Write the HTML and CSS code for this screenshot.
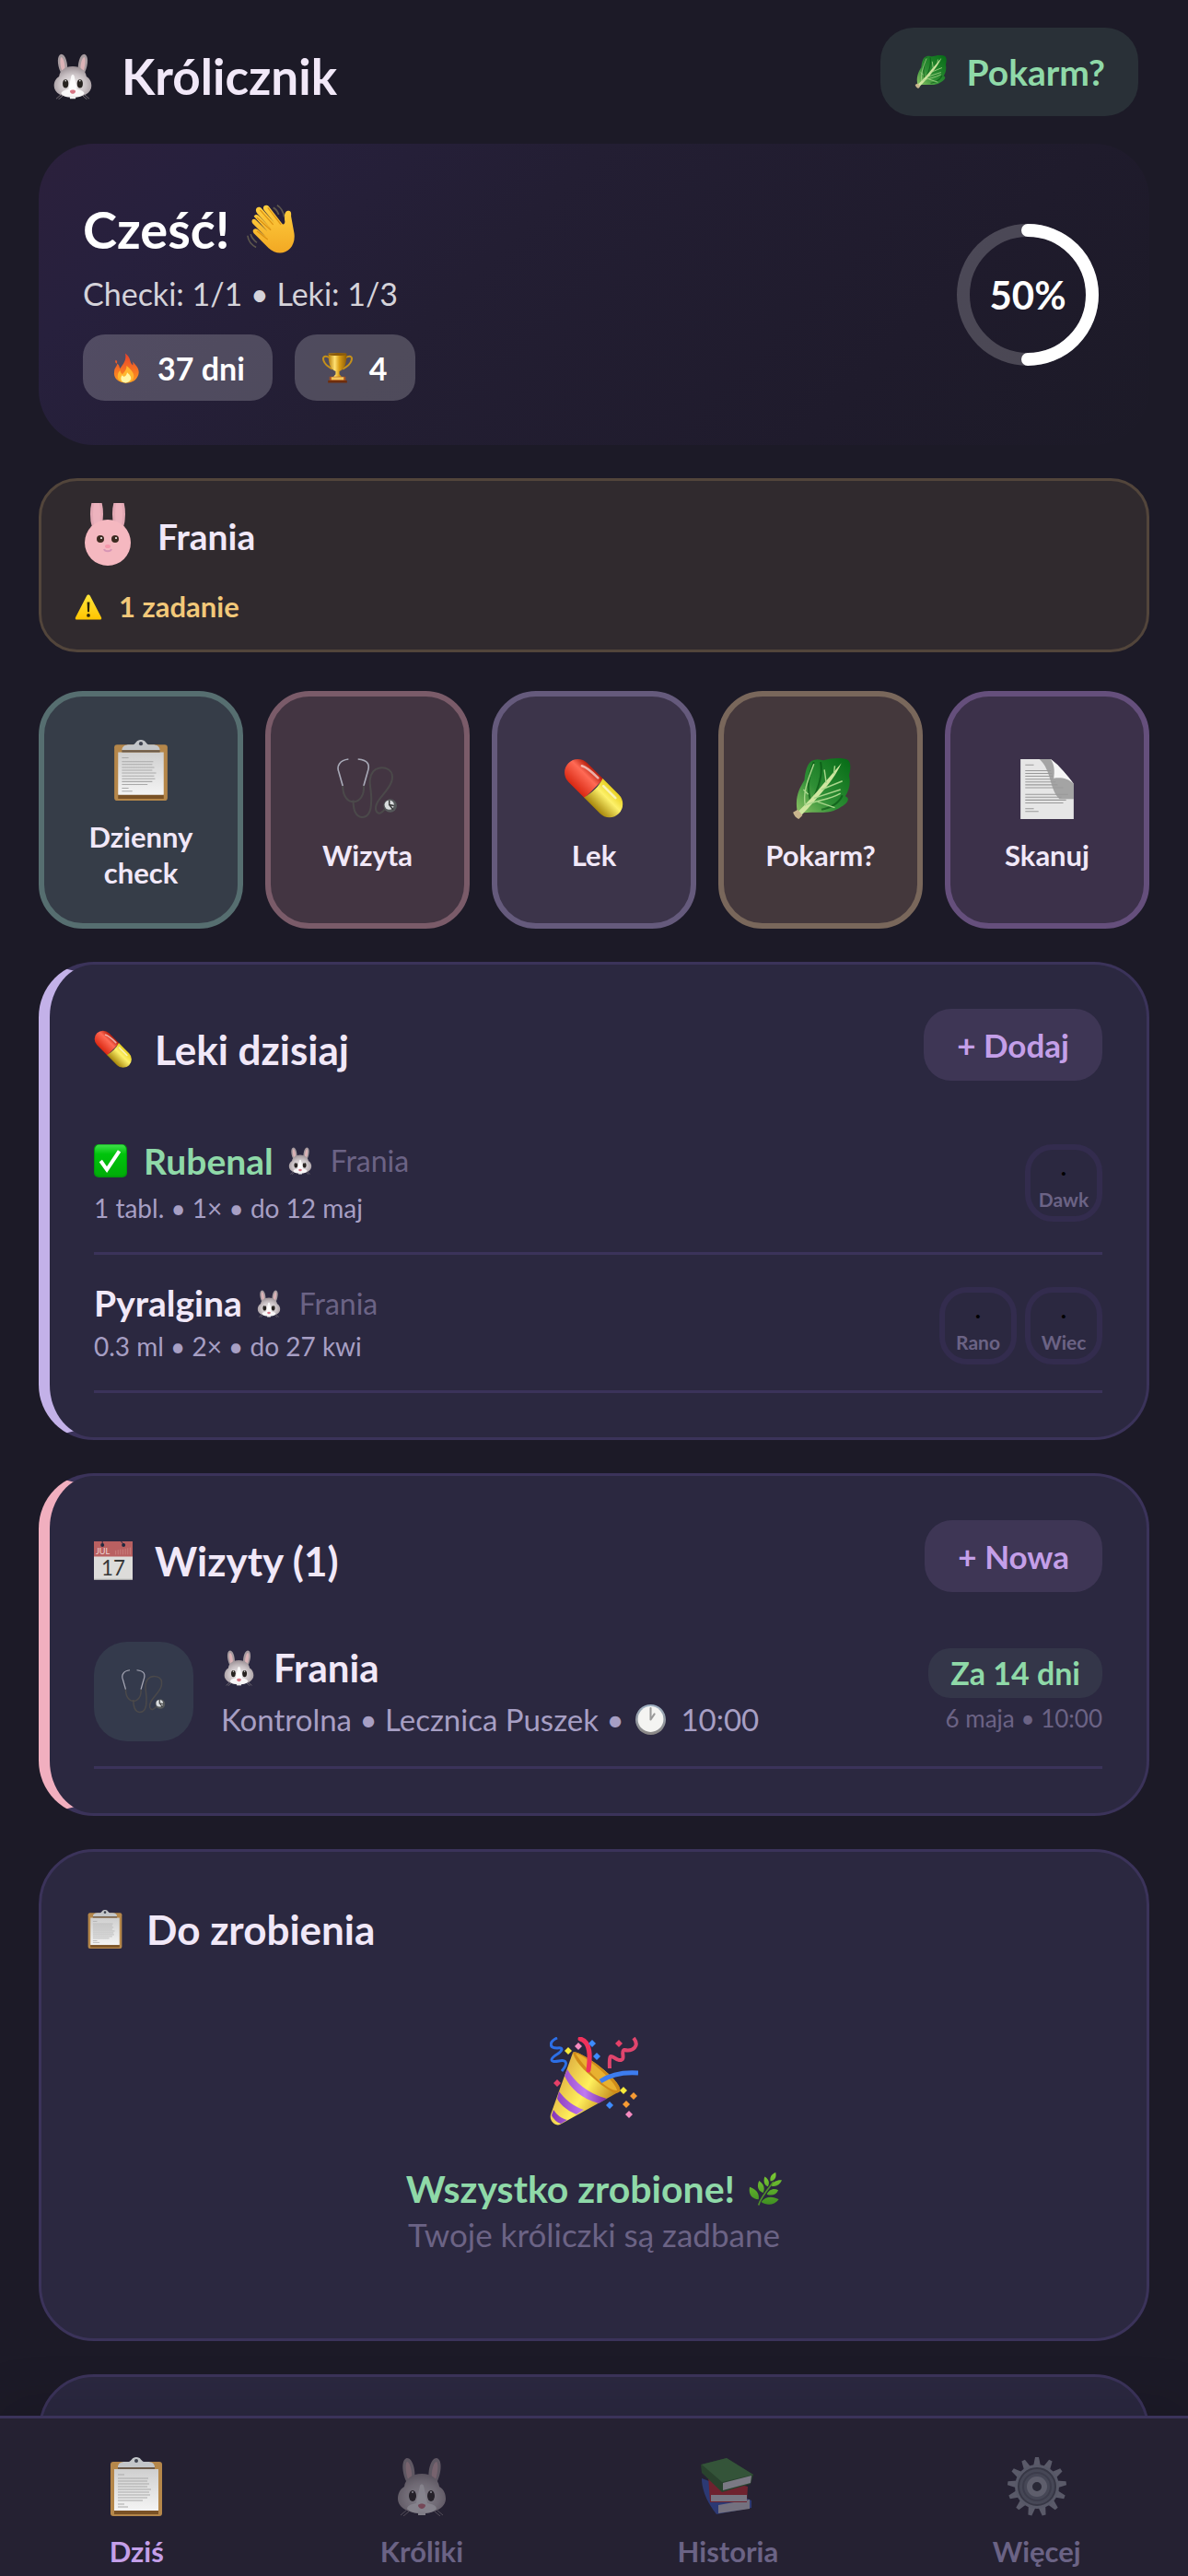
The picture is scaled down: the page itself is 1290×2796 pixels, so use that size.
FILE: index.html
```html
<!DOCTYPE html>
<html lang="pl">

<head>
    <meta charset="UTF-8">
    <meta name="viewport" content="width=device-width, initial-scale=1.0">
    <title>Królicznik</title>
    <link rel="stylesheet" href="styles.css">
</head>

<body>
    <svg class="sprite" aria-hidden="true">
        <defs>
            <radialGradient id="g-fur" cx=".5" cy=".6" r=".6">
                <stop offset="0" stop-color="#f4f1f2" />
                <stop offset=".6" stop-color="#c9c1c4" />
                <stop offset="1" stop-color="#9a8f94" />
            </radialGradient>
            <linearGradient id="g-leaf" x1="0" y1="1" x2="1" y2="0">
                <stop offset="0" stop-color="#8fc467" />
                <stop offset=".4" stop-color="#2f8f35" />
                <stop offset="1" stop-color="#056b16" />
            </linearGradient>
            <linearGradient id="g-hand" x1="0" y1="0" x2="0" y2="1">
                <stop offset="0" stop-color="#ffcf3f" />
                <stop offset="1" stop-color="#f2a823" />
            </linearGradient>
            <linearGradient id="g-fire" x1="0" y1="0" x2="0" y2="1">
                <stop offset="0" stop-color="#e8402a" />
                <stop offset="1" stop-color="#ff9a1f" />
            </linearGradient>
            <linearGradient id="g-gold" x1="0" y1="0" x2="1" y2="0">
                <stop offset="0" stop-color="#b57d0a" />
                <stop offset=".35" stop-color="#ffe071" />
                <stop offset=".6" stop-color="#d99d14" />
                <stop offset="1" stop-color="#8f5d05" />
            </linearGradient>
            <linearGradient id="g-paper" x1="0" y1="0" x2="0" y2="1">
                <stop offset="0" stop-color="#cfcfcf" />
                <stop offset="1" stop-color="#f4f4f4" />
            </linearGradient>
            <linearGradient id="g-red" x1="0" y1="0" x2="0" y2="1">
                <stop offset="0" stop-color="#b8200f" />
                <stop offset=".35" stop-color="#ff6a55" />
                <stop offset="1" stop-color="#d92812" />
            </linearGradient>
            <linearGradient id="g-yellow" x1="0" y1="0" x2="0" y2="1">
                <stop offset="0" stop-color="#e8d022" />
                <stop offset=".4" stop-color="#fdf16a" />
                <stop offset="1" stop-color="#a8870c" />
            </linearGradient>
            <linearGradient id="g-check" x1="0" y1="0" x2="0" y2="1">
                <stop offset="0" stop-color="#3fe04a" />
                <stop offset=".3" stop-color="#00c40c" />
                <stop offset="1" stop-color="#00ad08" />
            </linearGradient>
            <linearGradient id="g-warn" x1="0" y1="0" x2="0" y2="1">
                <stop offset="0" stop-color="#ffe63c" />
                <stop offset="1" stop-color="#ffc400" />
            </linearGradient>
            <linearGradient id="g-clock" x1="0" y1="0" x2="0" y2="1">
                <stop offset="0" stop-color="#9fb2c4" />
                <stop offset="1" stop-color="#8a8684" />
            </linearGradient>
            <linearGradient id="g-cone" x1="0" y1="0" x2="1" y2=".6">
                <stop offset="0" stop-color="#d99b22" />
                <stop offset=".3" stop-color="#e6bd47" />
                <stop offset=".6" stop-color="#fff05c" />
                <stop offset="1" stop-color="#b87812" />
            </linearGradient>
            <linearGradient id="g-stripe" x1="0" y1="0" x2="1" y2="0">
                <stop offset="0" stop-color="#8636b8" />
                <stop offset=".6" stop-color="#c07af0" />
                <stop offset="1" stop-color="#7a2aa3" />
            </linearGradient>
            <linearGradient id="g-herb" x1="0" y1="0" x2="0" y2="1">
                <stop offset="0" stop-color="#7ccb35" />
                <stop offset="1" stop-color="#3f8f22" />
            </linearGradient>
        </defs>

        <symbol id="i-rabbit" viewBox="0 0 64 64">
            <path d="M15 26C10 15 10 2 16 1c6 0 10 14 8 24zM49 26c5-11 5-24-1-25-6 0-10 14-8 24z" fill="#a69b9f" />
            <path d="M17 24c-3-9-3-18-1-19 3 0 6 11 5 18zM47 24c3-9 3-18 1-19-3 0-6 11-5 18z" fill="#dcb3b7" />
            <path d="M32 18c11 0 18 6 19 14 5 3 7 8 7 13 0 10-12 16-26 16S6 55 6 45c0-5 2-10 7-13 1-8 8-14 19-14z" fill="url(#g-fur)" />
            <path d="M30 31c1-2 3-2 4 0l4 19c6 1 10 3 10 6-3 4-10 5-16 5s-13-1-16-5c0-3 4-5 10-6z" fill="#fff" opacity=".85" />
            <ellipse cx="22" cy="42" rx="4" ry="6" fill="#26221f" />
            <ellipse cx="42" cy="42" rx="4" ry="6" fill="#26221f" />
            <circle cx="22" cy="38" r="1" fill="#fff" />
            <circle cx="42" cy="38" r="1" fill="#fff" />
            <path d="M28 52c2-2 6-2 8 0 0 3-3 4-4 4s-4-1-4-4z" fill="#d67584" />
            <path d="M28 59h8v4h-8z" fill="#eee" />
            <path d="M16 57l-7 6M18 59l-6 5M48 57l7 6M46 59l6 5" stroke="#8b8488" fill="none" />
        </symbol>

        <symbol id="i-lettuce" viewBox="0 0 64 64">
            <path d="M8 58C4 42 10 31 15 23 16 12 19 3 25 2 31 0 33 3 36 2 42 0 56-1 61 2 65 6 63 14 62 18 64 26 62 34 58 40 64 42 60 48 54 51 44 58 36 57 28 57 20 57 14 57 8 58z" fill="url(#g-leaf)" />
            <path d="M22 46c-5-14-2-30 3-42M26 39c6-14 8-26 6-35M33 54c10-2 18-6 22-15" stroke="#054f10" stroke-width="2" fill="none" opacity=".6" />
            <path d="M6 59C17 47 24 41 35 27 42 19 48 12 54 5 48 18 42 25 35 34 25 46 18 54 9 63z" fill="#cfe6a0" />
            <path d="M16 50c-3-12 2-26 9-44M17 49c11-5 24-5 36-12M38 26l-2-14M46 17l1-9M33 33l22-9M25 42l28-9M14 33l5 5M29 46l18 6" stroke="#a9d68b" stroke-width="1.4" fill="none" />
            <path d="M3 57l5-3 5 6-4 4c-3-1-5-4-6-7z" fill="#c9b58d" />
        </symbol>

        <symbol id="i-wave" viewBox="0 0 64 64">
            <path d="M9 15c3-4 6-1 8 1L31 31 13 11c-4-6 2-10 6-6L36 24 22 7c-3-5 3-8 6-5L45 24c2 3 4 1 4-2-1-6-1-13 4-14 5 0 4 4 4 7l4 22c3 22-18 33-33 19L10 38c-5-5 0-9 4-6l11 10L8 25c-4-5 1-8 4-5l15 15z" fill="url(#g-hand)" />
            <path d="M13 17l18 16M17 7l17 19M27 4l17 22M13 34l14 11" stroke="#dd9213" stroke-width="1.5" fill="none" />
            <path d="M39 1c5 3 8 8 9 15M34 4c4 2 6 6 7 9M1 40c1 7 5 12 11 15M5 38c1 5 4 8 8 11" stroke="#5d574d" stroke-width="2" fill="none" />
        </symbol>

        <symbol id="i-fire" viewBox="0 0 64 64">
            <path d="M31 1c14 11 7 17 16 25 1-4 0-6-1-8 10 10 18 20 11 32-5 10-14 13-25 13C17 63 5 54 8 38c1-7 6-10 6-15 5 3 4 6 6 10C28 22 34 15 31 1zM11 15c4 2 3 5 2 8-3-2-4-5-2-8z" fill="url(#g-fire)" />
            <path d="M34 27c9 8 16 16 15 23-1 9-9 13-17 13-9 0-17-5-17-14 0-6 3-10 5-12 1 4 3 7 5 8 6-6 9-11 9-18z" fill="#ffb52e" />
            <path d="M35 41c5 5 9 8 8 14-2 5-6 8-11 8s-10-3-10-9c0-3 1-5 3-7 1 2 3 3 4 3 4-2 5-5 6-9z" fill="#fff5a5" />
        </symbol>

        <symbol id="i-trophy" viewBox="0 0 64 64">
            <path d="M15 10C4 4 0 9 3 17c3 9 11 13 18 17M49 10c11-6 15-1 12 7-3 9-11 13-18 17" stroke="#c4901a" stroke-width="4" fill="none" />
            <path d="M13 1h38c1 20-4 34-15 38v6l6 7H22l6-7v-6C17 35 12 21 13 1z" fill="url(#g-gold)" />
            <ellipse cx="32" cy="3" rx="19" ry="3" fill="#8c5b08" />
            <path d="M15 50h34v9H15z" fill="#a8531f" />
            <path d="M19 51h26v6H19z" fill="#f2c55b" />
            <path d="M12 58h40v5H12z" fill="#6f2d0c" />
        </symbol>

        <symbol id="i-warning" viewBox="0 0 64 64">
            <path d="M28 6c2-4 6-4 8 0l26 50c1 3 0 5-4 5H6c-4 0-5-2-4-5z" fill="url(#g-warn)" />
            <path d="M29 20h6l-1 23h-4z" fill="#2b2509" />
            <circle cx="32" cy="51" r="4" fill="#2b2509" />
        </symbol>

        <symbol id="i-clipboard" viewBox="0 0 64 64">
            <rect x="4" y="5" width="56" height="59" rx="3" fill="#b5874a" />
            <path d="M8 57h48v5H8z" fill="#7a5226" />
            <path d="M8 13h48v45H8z" fill="url(#g-paper)" />
            <path d="M12 19h7M12 23h33M12 26h32M12 29h34M12 32h32M12 35h36M12 38h34M12 41h35M12 44h32M12 47h27M12 51h7M12 54h11" stroke="#a9a9a9" fill="none" />
            <path d="M12 11c0-4 3-6 8-6h4c3-1 3-5 8-5s5 4 8 5h4c5 0 8 2 8 6z" fill="#c3c6c9" />
            <path d="M12 11h40v2H12z" fill="#6b5a4a" />
            <circle cx="32" cy="4" r="2" fill="#3f4450" />
        </symbol>

        <symbol id="i-stethoscope" viewBox="0 0 64 64">
            <path d="M12 1C3 2-1 8 2 15l4 14M22 1c11 1 13 6 10 14l-4 14" stroke="#a7a8b6" stroke-width="1.6" fill="none" />
            <path d="M6 29c0 24 24 21 22 0M17 44c0 9 2 17 9 18 7 0 10-6 10-17 1-12-5-22 2-31 6-7 22-5 20 8-1 12-20 22-17 33 2 5 6 3 9-1" stroke="#4b494a" stroke-width="2" fill="none" />
            <circle cx="56" cy="50" r="7" fill="#55585a" />
            <circle cx="55" cy="49" r="5" fill="#d9dcde" />
            <path d="M55 44v5l5 1M55 49l4 5" stroke="#3b3c3c" stroke-width="1.5" fill="none" />
        </symbol>

        <symbol id="i-pill" viewBox="0 0 64 64">
            <g transform="rotate(45 32 32)">
                <path d="M32 18v28H8a14 14 0 0 1 0-28z" fill="url(#g-red)" />
                <path d="M31 18h24a14 14 0 0 1 0 28H31c3-9 3-19 0-28z" fill="url(#g-yellow)" />
                <path d="M6 24c5-3 13-3 21-3M37 23h18" stroke="#fff" stroke-width="2.5" stroke-linecap="round" fill="none" opacity=".6" />
            </g>
        </symbol>

        <symbol id="i-page" viewBox="0 0 64 64">
            <path d="M4 1h32c10 8 17 17 24 26v37H4z" fill="#e6e6e6" />
            <path d="M24 1h12l12 14 12 12v16H45C34 32 37 13 24 1z" fill="#555" opacity=".45" />
            <path d="M36 1c4 7 4 13 3 20 8-1 15 0 21 6C53 18 46 9 36 1z" fill="#f5f5f5" />
            <path d="M9 7h9M9 13h27M9 16h28M9 19h29M9 22h29M9 25h32M9 28h34M9 31h40M9 38h45M9 41h38M9 44h43M9 47h40M9 53h9M9 56h14" stroke="#999" fill="none" />
        </symbol>

        <symbol id="i-check" viewBox="0 0 64 64">
            <rect x="0" y="0" width="64" height="64" rx="9" fill="#009a0c" />
            <rect x="2" y="1" width="60" height="60" rx="8" fill="url(#g-check)" />
            <path d="M13 32l12 17 24-36" stroke="#fff" stroke-width="7" fill="none" />
        </symbol>

        <symbol id="i-clock" viewBox="0 0 64 64">
            <circle cx="32" cy="32" r="32" fill="url(#g-clock)" />
            <circle cx="32" cy="31" r="27" fill="#f4f4f2" />
            <path d="M32 32V8M32 32l8-12" stroke="#9a9a9a" stroke-width="4" stroke-linecap="round" />
        </symbol>

        <symbol id="i-party" viewBox="0 0 96 96">
            <path d="M25 17C28 11 82 49 76 59L11 95c-5 2-12-4-10-11z" fill="url(#g-cone)" />
            <path d="M25 17c6-5 53 29 51 42-4 5-12-2-20-7C43 41 28 29 25 17z" fill="#d08b18" />
            <path d="M28 18c8 0 44 30 45 40-8 1-30-17-45-40z" fill="#e8b130" />
            <path d="M19 35c8 14 22 26 43 32l-9 5C35 67 22 56 16 42zM10 59c7 9 15 16 27 20l-8 5C19 80 12 74 8 67zM4 79c4 6 8 9 15 11l-7 4c-4-1-8-5-10-9z" fill="url(#g-stripe)" />
            <path d="M33 2c12 3 11 20 9 34" stroke="#f0325c" stroke-width="5" stroke-linecap="round" fill="none" />
            <path d="M55 48c12-8 26-10 41-9" stroke="#3d7df0" stroke-width="5" fill="none" />
            <path d="M8 1c-9 4-9 11 0 11 7-1 6 2 1 6-10 6-9 10 1 8 10-2 9 4 3 11" stroke="#2c6fe6" stroke-width="3" fill="none" />
            <path d="M91 1c7 9-1 15-10 13-5 1 3 12-6 11-8-3-11-11-10 9" stroke="#e0456d" stroke-width="4" fill="none" />
            <path d="M20 11l4 4-4 4-4-4zM80 54l4 4-4 4-4-4z" fill="#f6e93b" />
            <path d="M46 3l4 4-4 4-4-4zM51 17l4 4-4 4-4-4zM65 70l4 4-4 4-4-4z" fill="#3d8bff" />
            <path d="M31 6l4 4-4 4-4-4zM86 80l4 4-4 4-4-4z" fill="#f58ac0" />
            <path d="M75 3l4 4-4 4-4-4zM8 46l4 4-4 4-4-4z" fill="#e64068" />
            <path d="M91 60l4 4-4 4-4-4zM83 69l4 4-4 4-4-4z" fill="#f59a33" />
        </symbol>

        <symbol id="i-herb" viewBox="0 0 64 64">
            <path d="M19 63c3-13 15-27 29-45" stroke="#4f8f2a" stroke-width="3" fill="none" />
            <path d="M19 52C5 51-1 41 2 28c13 5 19 12 17 24zM28 39c-10-2-13-13-8-23 9 6 12 14 8 23zM37 27c-8-3-9-12-6-19 8 5 10 12 6 19zM42 17c-2-9 3-14 10-17 2 9-1 16-10 17zM44 26c3-8 11-12 20-11-4 9-11 13-20 11zM35 42c3-8 13-13 22-8-3 9-13 12-22 8zM24 57c8-11 22-12 34-5-9 11-22 13-34 5z" fill="url(#g-herb)" />
        </symbol>

        <symbol id="i-books" viewBox="0 0 64 64">
            <path d="M4 23l8 3 46 21v8l-38 7C12 52 4 38 4 23z" fill="#3557c4" />
            <path d="M22 52l34-6v10l-34 5z" fill="#d4d3dd" />
            <path d="M11 20l43 12-1 17H13z" fill="#c9242d" />
            <path d="M14 41h39v7H14z" fill="#dcdbe3" />
            <path d="M3 8L31 1l29 18-3 10-31 9L4 17z" fill="#2e6a28" />
            <path d="M4 8l27-7 29 18-34 8z" fill="#479243" />
            <path d="M27 28l31-8-1 8-30 8z" fill="#e4e4e8" />
        </symbol>

        <symbol id="i-gear" viewBox="0 0 64 64">
            <g fill="#9aa0ac">
                <path id="tooth" d="M28 10l2-10h4l2 10z" />
                <use href="#tooth" transform="rotate(27.7 32 32)" />
                <use href="#tooth" transform="rotate(55.4 32 32)" />
                <use href="#tooth" transform="rotate(83.1 32 32)" />
                <use href="#tooth" transform="rotate(110.8 32 32)" />
                <use href="#tooth" transform="rotate(138.5 32 32)" />
                <use href="#tooth" transform="rotate(166.2 32 32)" />
                <use href="#tooth" transform="rotate(193.8 32 32)" />
                <use href="#tooth" transform="rotate(221.5 32 32)" />
                <use href="#tooth" transform="rotate(249.2 32 32)" />
                <use href="#tooth" transform="rotate(276.9 32 32)" />
                <use href="#tooth" transform="rotate(304.6 32 32)" />
                <use href="#tooth" transform="rotate(332.3 32 32)" />
            </g>
            <circle cx="32" cy="32" r="24" fill="#959ba8" />
            <circle cx="32" cy="32" r="20" fill="#6f7682" stroke="#4d535e" stroke-width="2" />
            <circle cx="32" cy="32" r="15" fill="none" stroke="#585e6a" stroke-width="2" />
            <circle cx="32" cy="32" r="8" fill="#30323d" stroke="#a3a8b4" stroke-width="6" />
        </symbol>
    </svg>

    <div class="app">
        <main class="content">
            <header class="topbar">
                <h1 class="brand"><svg class="icon"><use href="#i-rabbit" /></svg>Królicznik</h1>
                <button class="feed-btn"><svg class="icon"><use href="#i-lettuce" /></svg>Pokarm?</button>
            </header>

            <section class="hero">
                <div>
                    <h2 class="hello">Cześć! <svg class="icon"><use href="#i-wave" /></svg></h2>
                    <p class="summary">Checki: 1/1 • Leki: 1/3</p>
                    <div class="stats">
                        <span class="stat"><svg class="icon"><use href="#i-fire" /></svg>37 dni</span>
                        <span class="stat"><svg class="icon"><use href="#i-trophy" /></svg>4</span>
                    </div>
                </div>
                <div class="ring">
                    <svg viewBox="0 0 168 168">
                        <circle class="ring-track" cx="84" cy="84" r="70" />
                        <circle class="ring-value" cx="84" cy="84" r="70" pathLength="100" stroke-dasharray="50 100" />
                    </svg>
                    <span class="ring-label">50%</span>
                </div>
            </section>

            <section class="pet">
                <div class="pet-name">
                    <svg class="avatar" viewBox="0 0 72 72">
                        <ellipse cx="24" cy="12" rx="7" ry="20" fill="#e3a9b5" />
                        <ellipse cx="48" cy="12" rx="7" ry="20" fill="#e3a9b5" />
                        <ellipse cx="24" cy="12" rx="4" ry="17" fill="#edb3be" />
                        <ellipse cx="48" cy="12" rx="4" ry="17" fill="#edb3be" />
                        <circle cx="36" cy="43" r="25" fill="#f5b8c0" />
                        <circle cx="28" cy="39" r="4" fill="#3d2a20" />
                        <circle cx="44" cy="39" r="4" fill="#3d2a20" />
                        <circle cx="29" cy="38" r="1" fill="#fff" />
                        <circle cx="45" cy="38" r="1" fill="#fff" />
                        <ellipse cx="36" cy="47" rx="3" ry="2" fill="#f598ab" />
                        <path d="M32 50c1 3 7 3 8 0" stroke="#d795b5" stroke-width="2" fill="none" />
                    </svg>
                    Frania
                </div>
                <div class="pet-task"><svg class="icon"><use href="#i-warning" /></svg>1 zadanie</div>
            </section>

            <section class="actions">
                <button class="action mint"><svg class="icon"><use href="#i-clipboard" /></svg>Dzienny check</button>
                <button class="action pink"><svg class="icon"><use href="#i-stethoscope" /></svg>Wizyta</button>
                <button class="action lilac"><svg class="icon"><use href="#i-pill" /></svg>Lek</button>
                <button class="action peach"><svg class="icon"><use href="#i-lettuce" /></svg>Pokarm?</button>
                <button class="action violet"><svg class="icon"><use href="#i-page" /></svg>Skanuj</button>
            </section>

            <section class="card meds">
                <div class="card-header">
                    <h2 class="card-title"><svg class="icon"><use href="#i-pill" /></svg>Leki dzisiaj</h2>
                    <button class="add-btn">+ Dodaj</button>
                </div>
                <div class="med done">
                    <div>
                        <div class="med-name">
                            <svg class="icon tick"><use href="#i-check" /></svg>
                            <strong>Rubenal</strong>
                            <svg class="icon"><use href="#i-rabbit" /></svg>
                            <span>Frania</span>
                        </div>
                        <div class="med-info">1 tabl. • 1× • do 12 maj</div>
                    </div>
                    <div class="doses">
                        <button class="dose"><i>·</i>Dawk</button>
                    </div>
                </div>
                <div class="med">
                    <div>
                        <div class="med-name">
                            <strong>Pyralgina</strong>
                            <svg class="icon"><use href="#i-rabbit" /></svg>
                            <span>Frania</span>
                        </div>
                        <div class="med-info">0.3 ml • 2× • do 27 kwi</div>
                    </div>
                    <div class="doses">
                        <button class="dose"><i>·</i>Rano</button>
                        <button class="dose"><i>·</i>Wiec</button>
                    </div>
                </div>
            </section>

            <section class="card visits">
                <div class="card-header">
                    <h2 class="card-title">
                        <svg class="icon" viewBox="0 0 64 64">
                            <path d="M0 0h64v64H0z" fill="#dddcda" />
                            <path d="M0 0h64v25H0z" fill="#b96061" />
                            <circle cx="14" cy="6" r="3" fill="#1f2a40" />
                            <circle cx="49" cy="6" r="3" fill="#1f2a40" />
                            <path d="M14 5V0M49 5l-4-5" stroke="#1f2a40" stroke-width="1.5" />
                            <path d="M36 22v-7M40 22v-8M44 22v-9M48 22v-9M52 22v-10M56 22v-11M60 22V10" stroke="#cf8c8a" fill="none" />
                            <path d="M0 62h64v2H0z" fill="#aaa" />
                            <text class="cal-month" x="3" y="22">JUL</text>
                            <text class="cal-day" x="32" y="57">17</text>
                        </svg>
                        Wizyty (1)
                    </h2>
                    <button class="add-btn">+ Nowa</button>
                </div>
                <div class="visit">
                    <div class="visit-icon"><svg class="icon"><use href="#i-stethoscope" /></svg></div>
                    <div class="visit-main">
                        <div class="visit-name"><svg class="icon"><use href="#i-rabbit" /></svg>Frania</div>
                        <div class="visit-info">Kontrolna • Lecznica Puszek • <svg class="icon"><use href="#i-clock" /></svg> 10:00</div>
                    </div>
                    <div class="visit-when">
                        <span class="badge">Za 14 dni</span>
                        <span class="date">6 maja • 10:00</span>
                    </div>
                </div>
            </section>

            <section class="card">
                <h2 class="card-title"><svg class="icon"><use href="#i-clipboard" /></svg>Do zrobienia</h2>
                <div class="empty">
                    <svg class="icon"><use href="#i-party" /></svg>
                    <p class="empty-title">Wszystko zrobione! <svg class="icon"><use href="#i-herb" /></svg></p>
                    <p class="empty-text">Twoje króliczki są zadbane</p>
                </div>
            </section>

            <section class="card next"></section>
        </main>

        <nav class="tabs">
            <a href="#" class="tab active"><svg class="icon"><use href="#i-clipboard" /></svg>Dziś</a>
            <a href="#" class="tab"><svg class="icon"><use href="#i-rabbit" /></svg>Króliki</a>
            <a href="#" class="tab"><svg class="icon"><use href="#i-books" /></svg>Historia</a>
            <a href="#" class="tab"><svg class="icon"><use href="#i-gear" /></svg>Więcej</a>
        </nav>
    </div>
</body>

</html>
```

FILE: styles.css
```css
* {
    box-sizing: border-box;
}

body {
    margin: 0;
    background-color: #1c1a27;
    color: #f1e8f8;
    font-family: Lato, "Noto Sans", sans-serif;
    font-size: 36px;
}

h1,
h2,
p {
    margin: 0;
}

button {
    font: inherit;
    font-weight: 700;
    color: inherit;
    border: none;
    cursor: pointer;
}

.sprite {
    position: absolute;
    width: 0;
    height: 0;
}

.icon {
    flex: none;
    width: 36px;
    height: 36px;
}

.app {
    height: 100vh;
    display: flex;
    flex-direction: column;
}

.content {
    flex: 1;
    min-height: 0;
    overflow-y: auto;
    scrollbar-width: none;
    padding: 0 42px;
    display: flex;
    flex-direction: column;
    gap: 36px;
}

.content>* {
    flex: none;
}

/* top bar */

.topbar {
    display: flex;
    justify-content: space-between;
    align-items: center;
    padding: 30px 12px 0;
    margin-bottom: -6px;
}

.brand {
    display: flex;
    align-items: center;
    gap: 28px;
    padding-top: 9px;
    font-size: 53px;
    line-height: 60px;
}

.brand .icon {
    width: 50px;
    height: 50px;
}

.feed-btn {
    display: flex;
    align-items: center;
    gap: 22px;
    height: 96px;
    padding: 0 36px;
    border-radius: 36px;
    background-color: #293037;
    color: #8fd9a8;
    font-size: 39px;
}

/* hero */

.hero {
    display: flex;
    justify-content: space-between;
    align-items: center;
    padding: 48px;
    border-radius: 60px;
    background: linear-gradient(135deg, #2b203c 0%, #27203d 14%, #231e33 40%, #1f1b2c 75%, #1c1a27 100%);
    color: white;
}

.hello {
    display: flex;
    align-items: center;
    gap: 18px;
    padding-top: 3px;
    font-size: 56px;
    line-height: 84px;
}

.hello .icon {
    width: 54px;
    height: 54px;
}

.summary {
    font-size: 34px;
    line-height: 56px;
    color: #d5d3da;
}

.stats {
    display: flex;
    gap: 24px;
    margin-top: 16px;
}

.stat {
    display: flex;
    align-items: center;
    gap: 18px;
    height: 72px;
    padding: 0 30px;
    border-radius: 24px;
    background-color: rgba(255, 255, 255, 0.2);
    font-size: 34px;
    font-weight: 700;
}

.stat .icon {
    width: 33px;
    height: 33px;
}

.ring {
    display: grid;
    place-items: center;
}

.ring>* {
    grid-area: 1 / 1;
}

.ring svg {
    width: 168px;
    height: 168px;
    transform: rotate(-90deg);
}

.ring circle {
    fill: none;
    stroke-width: 14px;
}

.ring-track {
    stroke: rgba(255, 255, 255, 0.2);
}

.ring-value {
    stroke: white;
    stroke-linecap: round;
}

.ring-label {
    font-size: 42px;
    font-weight: 700;
}

/* pet */

.pet {
    padding: 24px 36px;
    border: 3px solid #52453b;
    border-radius: 42px;
    background-color: #302a2e;
}

.pet-name {
    display: flex;
    align-items: center;
    gap: 18px;
    font-size: 39px;
    font-weight: 700;
}

.avatar {
    width: 72px;
    height: 72px;
}

.pet-task {
    display: flex;
    align-items: center;
    gap: 18px;
    margin-top: 18px;
    font-size: 31px;
    font-weight: 700;
    line-height: 45px;
    color: #f2c879;
}

.pet-task .icon {
    width: 30px;
    height: 30px;
}

/* quick actions */

.actions {
    display: grid;
    grid-template-columns: repeat(5, 1fr);
    gap: 24px;
    margin-top: 6px;
}

.action {
    display: flex;
    flex-direction: column;
    align-items: center;
    justify-content: center;
    padding: 35px 24px;
    border: 6px solid;
    border-radius: 48px;
    font-size: 31px;
    line-height: 39px;
}

.action .icon {
    width: 66px;
    height: 66px;
    margin: 12px 0 20px;
}

.mint {
    background-color: #363d48;
    border-color: #566e70;
}

.pink {
    background-color: #433542;
    border-color: #7a5b69;
}

.lilac {
    background-color: #3c344a;
    border-color: #655a7c;
}

.peach {
    background-color: #44383c;
    border-color: #79675b;
}

.violet {
    background-color: #3c314a;
    border-color: #654f7c;
}

/* cards */

.card {
    padding: 48px;
    border: 3px solid #3b335a;
    border-radius: 60px;
    background-color: #2b2840;
}

.meds {
    border-left: 12px solid #c3b1e8;
}

.visits {
    border-left: 12px solid #f1afbf;
}

.card-header {
    display: flex;
    justify-content: space-between;
    align-items: center;
    margin-bottom: 30px;
}

.card-title {
    display: flex;
    align-items: center;
    gap: 24px;
    padding-top: 9px;
    font-size: 44px;
    line-height: 54px;
}

.card-title .icon {
    width: 42px;
    height: 42px;
}

.cal-month {
    font-size: 14px;
    font-weight: 400;
    fill: #f0d5d3;
}

.cal-day {
    font-size: 34px;
    font-weight: 400;
    text-anchor: middle;
    fill: #373737;
}

.add-btn {
    height: 78px;
    padding: 0 36px;
    border-radius: 30px;
    background-color: #3e3655;
    color: #c49fe8;
    font-size: 35px;
}

/* meds */

.med {
    display: flex;
    justify-content: space-between;
    align-items: center;
    padding: 30px 0 24px;
    border-bottom: 3px solid #3b335a;
}

.med-name {
    display: flex;
    align-items: center;
    font-size: 39px;
    line-height: 45px;
}

.med-name .icon {
    width: 30px;
    height: 30px;
    margin: 0 18px 0 14px;
}

.med-name .tick {
    width: 36px;
    height: 36px;
    margin: 0 18px 0 0;
}

.med-name span {
    font-size: 32px;
    color: #6b6385;
}

.done .med-name {
    line-height: 54px;
}

.done strong {
    color: #8fd9a8;
}

.med-info {
    font-size: 28px;
    line-height: 48px;
    color: #a79fc4;
}

.doses {
    display: flex;
    gap: 9px;
}

.dose {
    display: flex;
    flex-direction: column;
    align-items: center;
    justify-content: center;
    width: 84px;
    height: 84px;
    padding: 0;
    border: 6px solid #332c4e;
    border-radius: 30px;
    background: none;
    font-size: 21px;
    line-height: 24px;
    color: #6b6385;
}

.dose i {
    font-style: normal;
    line-height: 36px;
    color: black;
}

/* visits */

.visit {
    display: flex;
    align-items: center;
    gap: 30px;
    padding: 24px 0 27px;
    border-bottom: 3px solid #3b335a;
}

.visit-icon {
    display: grid;
    place-items: center;
    width: 108px;
    height: 108px;
    border-radius: 36px;
    background-color: #343a4c;
}

.visit-icon .icon {
    width: 48px;
    height: 48px;
}

.visit-main {
    flex: 1;
    display: flex;
    flex-direction: column;
    gap: 8px;
    padding-top: 4px;
}

.visit-name {
    display: flex;
    align-items: center;
    gap: 18px;
    font-size: 42px;
    font-weight: 700;
    line-height: 48px;
}

.visit-name .icon {
    width: 39px;
    height: 39px;
}

.visit-info {
    font-size: 33px;
    line-height: 48px;
    color: #a79fc4;
}

.visit-info .icon {
    width: 33px;
    height: 33px;
    margin: 0 8px 0 4px;
    vertical-align: -4px;
}

.visit-when {
    display: flex;
    flex-direction: column;
    align-items: flex-end;
    gap: 4px;
}

.badge {
    padding: 0 24px;
    border-radius: 24px;
    background-color: #343649;
    color: #8fd9a8;
    font-size: 34px;
    font-weight: 700;
    line-height: 54px;
}

.date {
    font-size: 26px;
    line-height: 36px;
    color: #6b6385;
}

/* empty state */

.empty {
    display: flex;
    flex-direction: column;
    align-items: center;
    padding: 90px 0 42px;
}

.empty>.icon {
    width: 96px;
    height: 96px;
}

.empty-title {
    display: flex;
    align-items: center;
    gap: 15px;
    margin-top: 42px;
    font-size: 41px;
    font-weight: 700;
    line-height: 54px;
    color: #8fd9a8;
}

.empty-text {
    font-size: 35px;
    line-height: 45px;
    color: #6b6385;
}

.next {
    min-height: 300px;
}

/* bottom tabs */

.tabs {
    position: relative;
    display: flex;
    justify-content: space-around;
    padding: 42px 0 9px;
    border-top: 3px solid #3b335a;
    background-color: #252132;
    box-shadow: 0 -12px 60px rgba(0, 0, 0, 0.12);
}

.tab {
    display: flex;
    flex-direction: column;
    align-items: center;
    gap: 20px;
    font-size: 31px;
    font-weight: 700;
    line-height: 36px;
    color: #6b6385;
    text-decoration: none;
}

.tab .icon {
    width: 64px;
    height: 64px;
    opacity: 0.45;
}

.tab.active {
    color: #c49fe8;
}

.tab.active .icon {
    opacity: 1;
}
```
